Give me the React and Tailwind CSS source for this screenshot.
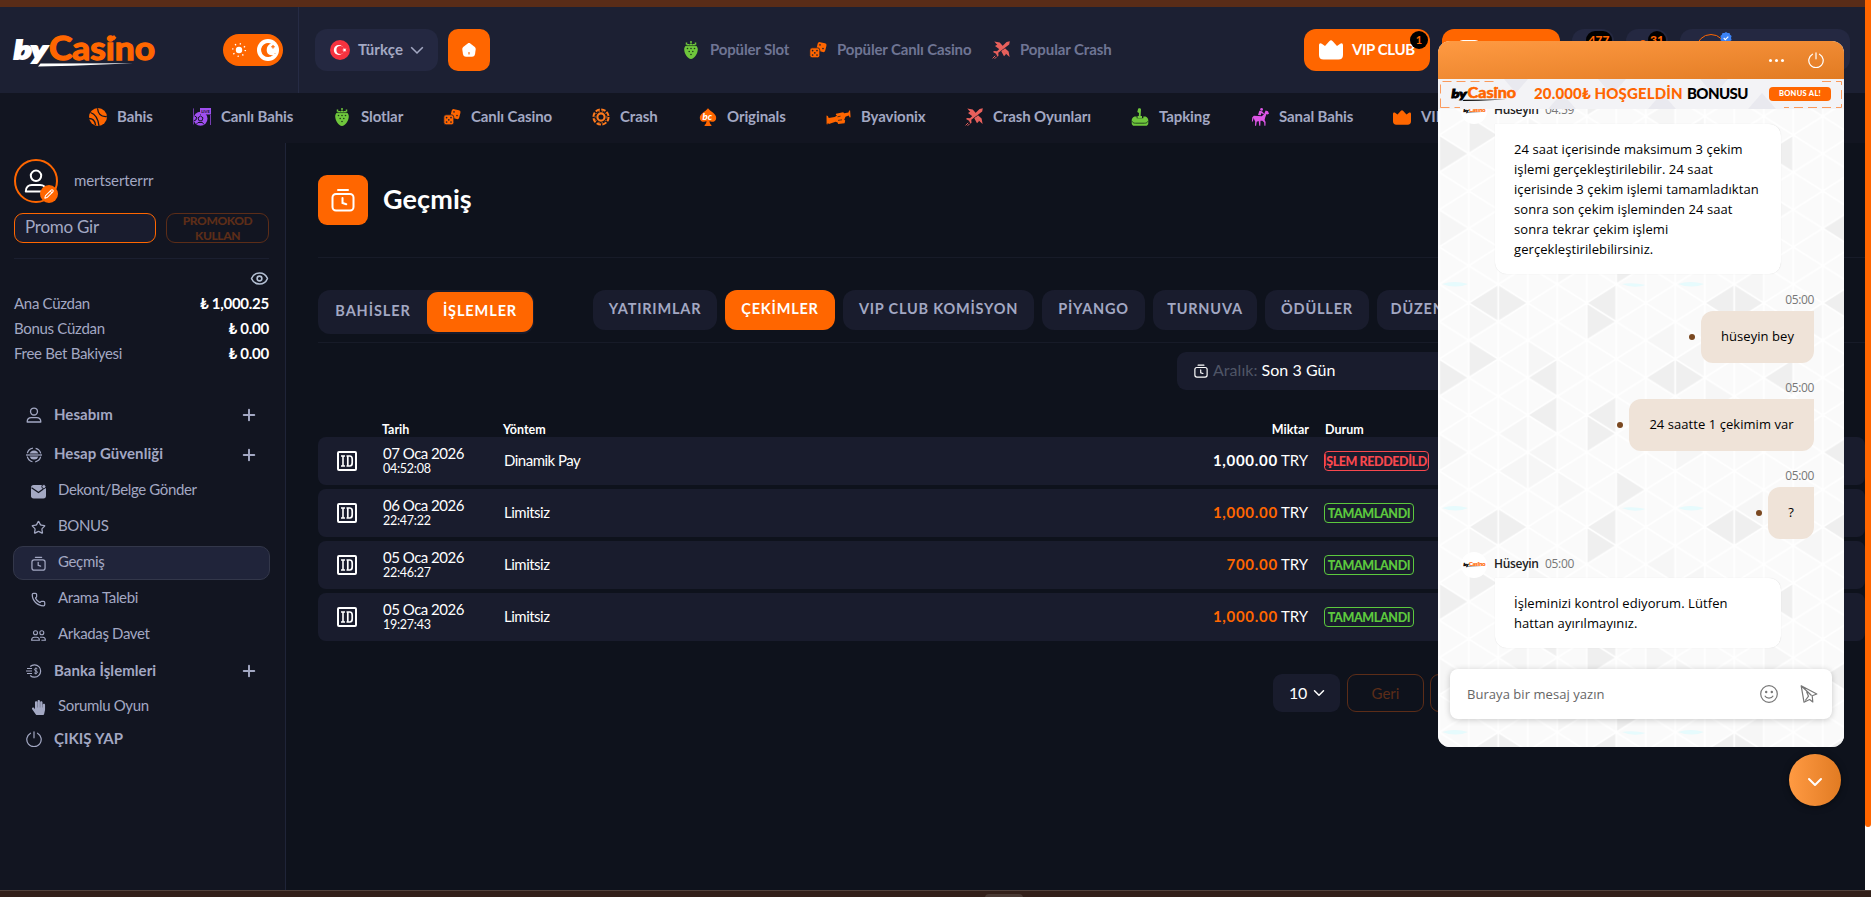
import { FaHandPaper } from "react-icons/fa";
import { ChevronDown, Eye, Pencil, Phone, Plus, Star } from "lucide-react";

function Strawberry({ className }) {
  return (
    <svg viewBox="0 0 18 18" className={className}>
      <path d="M9 3.600c4 0 6.800 1.400 6.800 5 0 4-3.500 9.400-6.800 9.400S2.200 12.600 2.200 8.600c0-3.600 2.800-5 6.800-5z" fill="#6fc63c" />
      <path d="M4.500 1.500v2.200h9V1.500M9 0v3" stroke="#6fc63c" strokeWidth="1.500" fill="none" strokeDasharray="2.200 .6" />
      <g fill="#1c3a1c">
        <circle cx="5.500" cy="7.500" r=".8" /><circle cx="9" cy="7.500" r=".8" /><circle cx="12.500" cy="7.500" r=".8" />
        <circle cx="7.200" cy="10.500" r=".8" /><circle cx="10.800" cy="10.500" r=".8" /><circle cx="9" cy="13.500" r=".8" />
      </g>
      <path d="M4 4.600h10" stroke="#1c3a1c" strokeWidth=".7" />
    </svg>
  );
}

function Dice({ className }) {
  return (
    <svg viewBox="0 0 18 18" className={className}>
      <rect x="8" y="1.600" width="9" height="9" rx="2" fill="#ff6600" transform="rotate(14 12.500 6)" />
      <rect x=".8" y="6.800" width="10" height="10" rx="2.300" fill="#ff6600" stroke="#1a1d2e" strokeWidth=".8" />
      <g fill="#1a1d2e">
        <circle cx="3.600" cy="9.600" r=".85" /><circle cx="8" cy="9.600" r=".85" /><circle cx="5.800" cy="11.800" r=".85" />
        <circle cx="3.600" cy="14" r=".85" /><circle cx="8" cy="14" r=".85" />
        <circle cx="11" cy="3.900" r=".8" /><circle cx="14" cy="7.600" r=".8" />
      </g>
    </svg>
  );
}

function CrossedPlanes({ className }) {
  return (
    <svg viewBox="0 0 18 18" className={className} fill="#e8605c">
      <path d="M17.800.2 14.600.9 5 10.300l-3-.2-1 1 3 1.600 1.500 3 1-1-.2-2.900L17.200 3.600z" />
      <path d="M2.300.6l5.400.8 3.600 4-2.400 2.600zM17.600 16l-1-5.400-3.600-3.400-2.600 2.400z" />
      <path d="M3 5 5.600 3.400l4 4.200-1.200 1.400zM12 15.200l2.300-2.400-3.600-3.800-1.400 1.200z" />
      <path d="M.6 17.400 3.200 14.800M2.600 17.800l2-2" stroke="#e8605c" strokeWidth="1" />
    </svg>
  );
}

function Ball({ className }) {
  return (
    <svg viewBox="0 0 18 18" className={className}>
      <circle cx="9" cy="9" r="9" fill="#ff6600" />
      <g fill="none" stroke="#121521" strokeWidth="1.300">
        <path d="M1.500 4.500C6 6 9 10 10 17.800" />
        <path d="M8.500.3C9 5.500 12 9 17.800 8.500" />
        <path d="M0 10.500c3.500 0 6 2.500 6.500 6.500" />
      </g>
    </svg>
  );
}

function LiveBall({ className }) {
  return (
    <svg viewBox="0 0 18 18" className={className}>
      <circle cx="7.500" cy="10.800" r="7" fill="#a04ff0" />
      <path d="m7.500 8 2.500 1.800-1 3H6l-1-3zM1.500 8l2 1-.5 3-2.200.6M3.500 16l1.500-1.500h4.500l1.200 1.800M7.500 5v2" fill="none" stroke="#121521" strokeWidth="1" />
      <rect x="7" y="0" width="11" height="6.500" fill="#a04ff0" />
      <text x="8.200" y="4.900" fontSize="4.200" fontWeight="700" fill="#121521" fontFamily="Lato">LIVE</text>
      <path d="M.4.400v16M17.500 7v10" stroke="#a04ff0" strokeWidth=".7" />
    </svg>
  );
}

function Chip({ className }) {
  return (
    <svg viewBox="0 0 18 18" className={className} fill="none" stroke="#ff7a1c">
      <circle cx="9" cy="9" r="7.600" strokeWidth="2" strokeDasharray="4.500 1.470" />
      <circle cx="9" cy="9" r="3.600" strokeWidth="2.100" />
      <circle cx="9" cy="9" r="5.900" strokeWidth=".8" strokeDasharray="1.500 2" />
    </svg>
  );
}

function Spade({ className }) {
  return (
    <svg viewBox="0 0 18 18" className={className}>
      <path d="M9 .3c2 3 8.200 5.400 8.200 9.600 0 3.700-4.500 4.900-6.700 3.100.1 1.800.5 3 1.900 4v.9H5.600V17c1.400-1 1.800-2.200 1.900-4C5.300 14.800.8 13.600.8 9.900.8 5.700 7 3.300 9 .3z" fill="#ff6600" />
      <text x="3.600" y="12.200" fontSize="9.500" fontWeight="900" fontStyle="italic" fill="#fff" fontFamily="Lato">bc</text>
    </svg>
  );
}

function Biplane({ className }) {
  return (
    <svg viewBox="0 0 25 18" className={className} fill="#ff6600">
      <path d="M.5 7.600c1 0 1.600.7 2.200 2.300l6-.8 2.300-1.700-1.200-.6.200-1 7.200-1.600 1 1 4.200-.6.800-2.200.9.100.5 6.700-.9.200-1-1.800-3.200 1.100-1.300 3.100 1 .8-.6 2.600-6.500.9-.5-1.600-2-.8-6 2-.6.200-1.200-1-.4 1.500-.8-.1z" />
      <path d="M11.500 8.800l3-.6M12 12.400l4-.6" stroke="#121521" strokeWidth=".7" />
    </svg>
  );
}

function Tap({ className }) {
  return (
    <svg viewBox="0 0 18 18" className={className}>
      <path d="M7 1.200C7-.2 10-.3 10 1.500L9.600 8h1.400v2H6.500V8h1.300L8 5 6.300 4z" fill="#6fc63c" />
      <path d="M3.500 8.600h2.200v1.600h6.600V8.600h2.200c2 1 2.800 2.200 2.800 4v2.600c0 1.500-1 2.600-2.600 2.600H3.300c-1.600 0-2.600-1.100-2.600-2.600v-2.600c0-1.800.8-3 2.800-4z" fill="#6fc63c" />
      <path d="M1 13.200c1 2 2.500 2 3.500 2h9c1 0 2.500 0 3.500-2" fill="none" stroke="#1c3a1c" strokeWidth=".9" />
    </svg>
  );
}

function Rider({ className }) {
  return (
    <svg viewBox="0 0 18 18" className={className}>
      <g fill="#dd55e6">
        <circle cx="10.600" cy="1.400" r="1.400" />
        <path d="M8.400 2.800 11 3.200l2 2.300-.6.800-2-1.300-.6 2.200-2.800-.3z" />
        <path d="M14.600 2.600 17 3.200l1 2.600-1.600.6-.9-.5-1.300 3.700-.6 2.400 1 2-.2 3.800h-1l-.2-3.200-1.800-1.900-1.900.1-.2 5H8.200l-.5-4.800-2 .8-.6 4H4l.2-4.400-.9-1.600L2.700 10l-.9 3.500-.9.300.3-4.200L2.800 7.800l4.400.1 3.600.3 2.400-2.200z" />
      </g>
    </svg>
  );
}

function Crown({ className }) {
  return (
    <svg viewBox="0 0 24 20" className={className} fill="currentColor">
      <path d="M0 5.200c0-2 1.500-2.600 2.800-1.400L6 6l4.300-4.700c1.200-1.400 2.200-1.400 3.400 0L18 6l3.200-2.200c1.300-1.200 2.800-.6 2.800 1.400V15c0 3-1.600 4.500-4.500 4.500h-15C1.600 19.500 0 18 0 15z" />
    </svg>
  );
}

function NavCrown({ className }) {
  return (
    <span className={className}>
      <Crown className="mt-0.5 h-[15px] w-[18px] text-[#ff6600]" />
    </span>
  );
}

function UserIcon({ className }) {
  return (
    <svg viewBox="0 0 24 24" className={className} fill="none" stroke="currentColor" strokeWidth="2">
      <circle cx="12" cy="6.800" r="5.200" />
      <path d="M1.800 22.500c0-4.500 3-6.500 6-6.500h8.400c3 0 6 2 6 6.500z" strokeLinejoin="round" />
    </svg>
  );
}

function HistoryIcon({ className }) {
  return (
    <svg viewBox="0 0 24 24" className={className} fill="none" stroke="currentColor" strokeWidth="2" strokeLinecap="round">
      <path d="M7 2h10" />
      <rect x="1.500" y="6" width="21" height="16.500" rx="3.500" />
      <path d="M11.500 10v5l3.800 1.300" />
    </svg>
  );
}

function ScanIcon({ className }) {
  return (
    <svg viewBox="0 0 16 16" className={className} fill="none" stroke="currentColor" strokeWidth="1.200">
      <circle cx="8" cy="8" r="6.900" strokeDasharray="8 2.830" strokeDashoffset="-1.500" />
      <circle cx="8" cy="8" r="4.600" fill="currentColor" stroke="none" />
      <path d="M0 8h16" stroke="#121521" strokeWidth="3" />
      <path d="M0 8h16" strokeWidth="1.800" opacity=".7" />
    </svg>
  );
}

function MailIcon({ className }) {
  return (
    <svg viewBox="0 0 14 14" className={className}>
      <rect x="0" y="1" width="14" height="12.500" rx="2.500" fill="currentColor" />
      <path d="M.5 3.500 7 8l4.500-3.400" fill="none" stroke="#121521" strokeWidth="1.200" />
      <circle cx="12" cy="2.400" r="1.900" fill="currentColor" stroke="#121521" strokeWidth=".9" />
    </svg>
  );
}

function FriendsIcon({ className }) {
  return (
    <svg viewBox="0 0 15 12" className={className} fill="none" stroke="currentColor" strokeWidth="1.100">
      <circle cx="4.500" cy="3.300" r="2" /><circle cx="10.800" cy="3.300" r="2" />
      <path d="M.6 10.800c0-2.200 1.200-3 2.800-3h2.200c1.600 0 2.800.8 2.800 3zM9 7.800h2.800c1.500 0 2.600.9 2.600 3h-4" />
    </svg>
  );
}

function CoinIcon({ className }) {
  return (
    <svg viewBox="0 0 16 14" className={className} fill="none" stroke="currentColor" strokeWidth="1.200">
      <path d="M4.200 2.500A6.200 6.200 0 1 1 4.200 11.500M1 4.500h5M0 7h6M1 9.500h5" />
      <path d="M11.400 4.800c-1.200-.9-3-.4-3 .8 0 1.500 3 1 3 2.600 0 1.300-2 1.700-3.200.7M9.900 3.600v6.800" strokeWidth="1" />
    </svg>
  );
}

function PowerIcon({ className }) {
  return (
    <svg viewBox="0 0 16 16" className={className} fill="none" stroke="currentColor" strokeWidth="1.200" strokeLinecap="round">
      <path d="M4.500 2.200a7.200 7.200 0 1 0 7 0M8 .8v6" />
    </svg>
  );
}

function IdIcon() {
  return (
    <svg viewBox="0 0 20 20" className="size-5 shrink-0" fill="none" stroke="#fff">
      <rect x="1" y="1" width="18" height="18" rx="1" strokeWidth="2" />
      <path d="M4 5h4M4 15h4M6 5v10" strokeWidth="1.600" />
      <path d="M10.800 5v10M9.500 5h3.200c1.800 0 2.500 1.200 2.500 3v4c0 1.800-.7 3-2.500 3H9.500" strokeWidth="1.700" />
    </svg>
  );
}

function Logo({ className, byFill }) {
  return (
    <svg viewBox="0 0 144 32" className={`overflow-visible ${className}`}>
      <text x="1" y="24" fontSize="24" fontWeight="900" fontStyle="italic" fill={byFill} stroke={byFill} strokeWidth="2" fontFamily="Lato" textLength="33" lengthAdjust="spacingAndGlyphs">by</text>
      <text x="36" y="25" fontSize="31.500" fontWeight="700" fill="#ff6600" stroke="#ff6600" strokeWidth="1.300" fontFamily="Lato" textLength="106" lengthAdjust="spacingAndGlyphs">Casino</text>
      <path d="M25 31.500 27.500 28.400 120 28.200 60 30.800z" fill={byFill} />
      <path d="m101 0 2.500 2.800L101 5.600l-2.500-2.800z" fill="#ff6600" />
    </svg>
  );
}

const navItems = [
  { label: "Bahis", icon: Ball, iconWidth: "w-[18px]", width: "w-[36px]" },
  { label: "Canlı Bahis", icon: LiveBall, iconWidth: "w-[18px]", width: "w-[72px]" },
  { label: "Slotlar", icon: Strawberry, iconWidth: "w-[18px]", width: "w-[42px]" },
  { label: "Canlı Casino", icon: Dice, iconWidth: "w-[18px]", width: "w-[81px]" },
  { label: "Crash", icon: Chip, iconWidth: "w-[18px]", width: "w-[39px]" },
  { label: "Originals", icon: Spade, iconWidth: "w-[18px]", width: "w-[59px]" },
  { label: "Byavionix", icon: Biplane, iconWidth: "w-[25px]", width: "w-[64px]" },
  { label: "Crash Oyunları", icon: CrossedPlanes, iconWidth: "w-[18px]", width: "w-[98px]" },
  { label: "Tapking", icon: Tap, iconWidth: "w-[18px]", width: "w-[52px]" },
  { label: "Sanal Bahis", icon: Rider, iconWidth: "w-[18px]", width: "w-[74px]" },
  { label: "VIP CLUB", icon: NavCrown, iconWidth: "w-[18px]", width: "w-[64px]" },
];

const wallets = [
  { label: "Ana Cüzdan", value: "₺ 1,000.25" },
  { label: "Bonus Cüzdan", value: "₺ 0.00" },
  { label: "Free Bet Bakiyesi", value: "₺ 0.00" },
];

const filters = [
  { label: "YATIRIMLAR", width: "w-[124px]" },
  { label: "ÇEKİMLER", width: "w-[110px]", active: true },
  { label: "VIP CLUB KOMİSYON", width: "w-[191px]" },
  { label: "PİYANGO", width: "w-[103px]" },
  { label: "TURNUVA", width: "w-[104px]" },
  { label: "ÖDÜLLER", width: "w-[104px]" },
  { label: "DÜZENLEMELER", width: "w-[150px]" },
];

const rows = [
  { date: "07 Oca 2026", time: "04:52:08", method: "Dinamik Pay", amount: "1,000.00", rejected: true },
  { date: "06 Oca 2026", time: "22:47:22", method: "Limitsiz", amount: "1,000.00" },
  { date: "05 Oca 2026", time: "22:46:27", method: "Limitsiz", amount: "700.00" },
  { date: "05 Oca 2026", time: "19:27:43", method: "Limitsiz", amount: "1,000.00" },
];

function Header() {
  return (
    <header className="flex h-[86px] shrink-0 items-center bg-[#1c2033]">
      <div className="flex h-full w-[299px] shrink-0 items-center justify-between border-r border-[#262b44] pl-[13px] pr-[15px]">
        <Logo className="mt-[1px] h-8 w-36" byFill="#ffffff" />
        <div className="flex h-8 w-[60px] items-center justify-between rounded-full bg-[#ff6600] pl-2 pr-1">
          <svg viewBox="0 0 16 16" className="size-4">
            <circle cx="8" cy="8" r="3.200" fill="#fff" />
            <circle cx="8" cy="8" r="6.300" fill="none" stroke="#fff" strokeWidth="1.500" strokeDasharray="1.200 3.748" />
          </svg>
          <svg viewBox="0 0 22 22" className="size-[22px]">
            <circle cx="11" cy="11" r="11" fill="#fff" />
            <path d="M14 4.600A7 7 0 1 0 16 16c-4 .8-6.300-1.500-6.300-5 0-3 1.600-5.500 4.300-6.400z" fill="#ff6600" />
            <path d="m16 6 .5 1.300 1.300.5-1.300.5L16 9.600l-.5-1.300-1.300-.5 1.300-.5zM17.500 14.500h1" fill="#ff6600" stroke="#ff6600" strokeWidth=".5" />
          </svg>
        </div>
      </div>

      <div className="ml-4 flex h-[42px] w-[123px] shrink-0 items-center rounded-xl bg-[#242841] pl-[15px]">
        <svg viewBox="0 0 20 20" className="size-5">
          <circle cx="10" cy="10" r="10" fill="#f5333f" />
          <circle cx="8.800" cy="10" r="5" fill="#fff" />
          <circle cx="10.300" cy="10" r="3.900" fill="#f5333f" />
          <path d="m12 10 1.600-.6.100-1.700 1 1.400 1.700-.5-1 1.400 1 1.400-1.700-.5-1 1.400-.1-1.700z" fill="#fff" />
        </svg>
        <span className="ml-2 w-[45px] pb-0.5 text-[15px] font-bold tracking-[0.1px] text-[#a3a8c3]">Türkçe</span>
        <svg viewBox="0 0 12 7" className="ml-2 h-[7px] w-3 overflow-visible" fill="none" stroke="#a3a8c3" strokeWidth="1.600">
          <path d="M.2.300 6 6 11.800.300" />
        </svg>
      </div>
      <div className="ml-2.5 flex size-[42px] shrink-0 items-center justify-center rounded-[10px] bg-[#ff6600]">
        <svg viewBox="0 0 14 14" className="size-3.5">
          <path d="M5.700.5c.8-.6 1.800-.6 2.600 0L12.800 4c.8.700 1 1.400.9 2.300l-.6 4.500c-.3 2-1.200 3-3.200 3H4.100c-2 0-2.900-1-3.200-3L.3 6.300C.2 5.400.4 4.700 1.200 4z" fill="#fff" />
          <rect x="6.400" y="9" width="1.200" height="2.500" rx=".6" fill="#ff6600" />
        </svg>
      </div>

      <div className="ml-[192px] flex items-center gap-[21px] text-[15px] font-bold tracking-[-0.15px] whitespace-nowrap text-[#6f7594]">
        <div className="flex items-center gap-2.5">
          <Strawberry className="size-[18px]" />
          <span className="w-[78px] pb-0.5">Popüler Slot</span>
        </div>
        <div className="flex items-center gap-2.5">
          <Dice className="size-[18px]" />
          <span className="w-[134px] pb-0.5">Popüler Canlı Casino</span>
        </div>
        <div className="flex items-center gap-2.5">
          <CrossedPlanes className="size-[18px]" />
          <span className="pb-0.5 tracking-[-0.1px]">Popular Crash</span>
        </div>
      </div>

      <div className="ml-auto mr-[15px] flex shrink-0 items-center gap-3">
        <div className="relative flex h-[42px] w-[126px] items-center rounded-xl bg-[#ff6600] pl-[15px] text-white">
          <Crown className="h-5 w-6" />
          <span className="ml-[9px] pb-0.5 text-[15px] font-bold tracking-[-0.4px] whitespace-nowrap">VIP CLUB</span>
          <span className="absolute top-[2px] right-[2px] flex size-[18px] items-center justify-center rounded-full bg-black text-[11px] font-bold text-[#ff6600]">1</span>
        </div>
        <div className="flex h-[42px] w-[118px] rounded-xl bg-[#ff6600] pt-[11px] pl-[15px]">
          <span className="h-4 w-6 rounded-md bg-white" />
        </div>
        <div className="relative h-[42px] w-[42px] rounded-xl bg-[#242841]">
          <span className="absolute top-[2px] right-[2px] flex h-[18px] w-[26px] items-center justify-center rounded-full bg-black text-[12px] font-black text-[#ff6600]">477</span>
        </div>
        <div className="relative h-[42px] w-[42px] rounded-xl bg-[#242841] pt-[11px] pl-[14px]">
          <span className="block size-1.5 rounded-full bg-[#ff6600]" />
          <span className="absolute top-[2px] right-[2px] flex size-[18px] items-center justify-center rounded-full bg-black text-[12px] font-black text-[#ff6600]">31</span>
        </div>
        <div className="relative h-[42px] w-[170px] rounded-xl bg-[#242841] pt-[5px] pl-[16px]">
          <span className="block size-[30px] rounded-full border border-[#ff6600]" />
          <svg viewBox="0 0 12 12" className="absolute top-[3px] left-[40px] size-3">
            <path d="m6 0 1.600 1.100 1.900-.1.600 1.800 1.500 1.200L11 6l.6 2-1.500 1.200-.6 1.800-1.900-.1L6 12l-1.600-1.100-1.900.1-.6-1.800L.4 8 1 6 .4 4l1.500-1.200L2.500 1l1.900.1z" fill="#3b82f6" />
            <path d="m3.700 6 1.600 1.600 3-3" fill="none" stroke="#fff" strokeWidth="1.100" />
          </svg>
        </div>
      </div>
    </header>
  );
}

function Nav() {
  return (
    <nav className="flex h-[50px] shrink-0 items-center gap-10 overflow-hidden bg-[#121521] pb-0.5 pl-[89px]">
      {navItems.map(({ label, icon: Icon, iconWidth, width }) => (
        <div key={label} className="flex shrink-0 items-center gap-2.5">
          <span className={`${iconWidth} h-[18px] shrink-0`}>
            <Icon className="block h-full w-full" />
          </span>
          <span className={`${width} pb-0.5 text-[15px] font-bold tracking-[-0.1px] whitespace-nowrap text-[#a3a8c3]`}>{label}</span>
        </div>
      ))}
    </nav>
  );
}

function MenuGroup({ icon: Icon, label, className, expandable }) {
  return (
    <div className={`flex items-center pl-[13px] pr-[12px] text-[15px] font-bold tracking-[0.05px] ${className}`}>
      <Icon className="size-4" />
      <span className="ml-3 flex-1 pb-0.5">{label}</span>
      {expandable && <Plus className="size-[18px]" strokeWidth={2.6} />}
    </div>
  );
}

function MenuLink({ icon: Icon, label, active }) {
  return (
    <div className={`my-px flex h-[34px] items-center rounded-[10px] border pl-[17px] text-[15px] tracking-[-0.35px] ${active ? "border-[#33374a] bg-[#20243a]" : "border-transparent"}`}>
      <Icon className="size-[15px] shrink-0" />
      <span className="ml-3 pb-[3px]">{label}</span>
    </div>
  );
}

function Sidebar() {
  return (
    <aside className="flex w-[286px] shrink-0 flex-col border-r border-[#1f2438] bg-[#121521] pr-[15px] pl-[13px] text-[#a3a8c3]">
      <div className="ml-px mt-4 flex items-center">
        <div className="relative flex size-11 items-center justify-center rounded-full border-2 border-[#ff6600] text-white">
          <UserIcon className="size-6" />
          <span className="absolute -right-[2px] -bottom-[2px] flex size-[18px] items-center justify-center rounded-full bg-[#ff6600]">
            <Pencil className="size-2.5" strokeWidth={2.5} />
          </span>
        </div>
        <span className="ml-4 pb-0.5 text-[15px] tracking-[-0.1px]">mertserterrr</span>
      </div>

      <div className="ml-px mt-2.5 flex gap-2.5">
        <div className="flex h-[30px] w-[142px] items-center rounded-[9px] border border-[#ff6600] bg-[#191c2e] pb-0.5 pl-2.5 text-[17px] tracking-[-0.25px]">Promo Gir</div>
        <div className="flex h-[30px] w-[103px] items-center justify-center rounded-[9px] border border-[#5c2d18] text-center text-[12px] leading-[15px] font-black tracking-[-0.4px] text-[#5c2d18]">
          PROMOKOD<br />KULLAN
        </div>
      </div>

      <div className="ml-px mt-[15px] w-[255px] border-t border-[#1b1f30]" />
      <div className="mt-2.5 flex justify-end pr-px">
        <Eye className="size-[19px] text-[#b4c0d4]" />
      </div>

      <div className="ml-px mt-1 pr-px text-[15px] tracking-[-0.3px]">
        {wallets.map((wallet) => (
          <div key={wallet.label} className="flex h-[25px] items-center justify-between pb-0.5">
            <span>{wallet.label}</span>
            <span className="font-bold tracking-[-0.25px] text-white">{wallet.value}</span>
          </div>
        ))}
      </div>

      <div className="mt-[28px] flex flex-col">
        <MenuGroup icon={UserIcon} label="Hesabım" className="h-10" expandable />
        <MenuGroup icon={ScanIcon} label="Hesap Güvenliği" className="h-[38px] pt-px" expandable />
        <MenuLink icon={MailIcon} label="Dekont/Belge Gönder" />
        <MenuLink icon={Star} label="BONUS" />
        <MenuLink icon={HistoryIcon} label="Geçmiş" active />
        <MenuLink icon={Phone} label="Arama Talebi" />
        <MenuLink icon={FriendsIcon} label="Arkadaş Davet" />
        <MenuGroup icon={CoinIcon} label="Banka İşlemleri" className="h-9" expandable />
        <MenuLink icon={FaHandPaper} label="Sorumlu Oyun" />
        <MenuGroup icon={PowerIcon} label="ÇIKIŞ YAP" className="h-7" />
      </div>
    </aside>
  );
}

function History() {
  return (
    <main className="min-w-0 flex-1 overflow-hidden pt-8 pl-8">
      <div className="flex items-center">
        <div className="flex size-[50px] items-center justify-center rounded-[9px] bg-[#ff6600] text-white">
          <HistoryIcon className="size-6" />
        </div>
        <h1 className="ml-[15px] pb-px text-[27px] font-bold tracking-[0.1px] text-white">Geçmiş</h1>
      </div>

      <div className="mt-8 border-t border-[#171b28]" />

      <div className="mt-8 flex items-start border-b border-[#171b28] pb-2">
        <div className="flex h-11 w-[216px] shrink-0 items-center rounded-xl bg-[#191c2d] p-px text-[14.5px] font-bold tracking-[0.9px] text-[#a3a8c3]">
          <span className="flex w-[108px] items-center justify-center pb-0.5">BAHİSLER</span>
          <span className="flex h-10 w-[106px] items-center justify-center rounded-[11px] bg-[#ff6600] pb-0.5 text-white">İŞLEMLER</span>
        </div>
        <div className="ml-[59px] flex gap-2">
          {filters.map((filter) => (
            <span
              key={filter.label}
              className={`${filter.width} flex h-10 shrink-0 items-center justify-center rounded-xl pb-0.5 text-[14.5px] font-bold tracking-[0.8px] whitespace-nowrap ${filter.active ? "bg-[#ff6600] text-white" : "bg-[#191c2d] text-[#a3a8c3]"}`}
            >
              {filter.label}
            </span>
          ))}
        </div>
      </div>

      <div className="mt-[9px] ml-[859px] flex h-[38px] w-[320px] items-center rounded-[9px] bg-[#191c2d] pl-[17px] text-[16px] tracking-[0.05px] text-white">
        <HistoryIcon className="size-3.5" />
        <span className="ml-[5px] pb-0.5 text-[#4f5566]">Aralık:</span>
        <span className="ml-1 pb-0.5">Son 3 Gün</span>
      </div>

      <div className="mt-8 flex h-[15px] items-center pt-0.5 text-[12.5px] font-bold text-white">
        <span className="ml-16 w-[121px]">Tarih</span>
        <span className="w-[600px]">Yöntem</span>
        <span className="w-[206px] text-right">Miktar</span>
        <span className="ml-4">Durum</span>
      </div>
      <div className="flex flex-col gap-1">
        {rows.map((row) => (
          <div key={row.time} className="flex h-12 items-center rounded-lg bg-[#191c2d] pl-[19px] text-[15px] tracking-[-0.5px] text-white">
            <IdIcon />
            <div className="ml-[26px] w-[121px] pb-px">
              <div className="leading-4">{row.date}</div>
              <div className="text-[12.5px] leading-[15px] tracking-[-0.25px]">{row.time}</div>
            </div>
            <span className="w-[600px] pb-0.5">{row.method}</span>
            <span className="w-[204px] pb-0.5 text-right tracking-[-0.1px]">
              <span className={`font-bold tracking-[0.7px] ${row.rejected ? "text-white" : "text-[#ff6600]"}`}>{row.amount}</span> TRY
            </span>
            {row.rejected ? (
              <span className="ml-4 flex h-5 w-[105px] items-center justify-center overflow-hidden rounded border border-[#f8484e] pt-px text-[12.5px] leading-4 font-black tracking-[-0.4px] whitespace-nowrap text-[#f8484e]">İŞLEM REDDEDİLDİ</span>
            ) : (
              <span className="ml-4 flex h-5 w-[90px] items-center justify-center rounded border border-[#5cc83e] pt-px text-[12.5px] leading-4 font-black tracking-[-0.4px] text-[#5cc83e]">TAMAMLANDI</span>
            )}
          </div>
        ))}
      </div>

      <div className="mt-[33px] ml-[955px] flex h-[38px] text-[15px]">
        <div className="flex w-[67px] items-center rounded-[9px] bg-[#191c2d] pl-4 text-[16px] text-white">
          <span className="w-[17px] tracking-[-0.3px]">10</span>
          <ChevronDown className="ml-[4px] size-[18px]" />
        </div>
        <div className="ml-[7px] flex w-[77px] items-center justify-center rounded-[9px] border border-[#5c2d18] text-[#5c2d18]">Geri</div>
        <div className="ml-1.5 flex w-[77px] items-center justify-center rounded-[9px] border border-[#5c2d18] text-[#5c2d18]">İleri</div>
      </div>
    </main>
  );
}

// tip column, tip row (in cells), direction of the tip
const darkTriangles = [
  [1, 2, 1], [3, 2, -1], [7, 2, -1], [9, 2, 1], [11, 2, -1], [2, 1.5, 1], [1, 0, -1], [3, 0, 1], [9, 0, -1],
  [11, 0, 1], [6, 0.5, 1], [5, 0, -1], [13, 0, -1], [3, 3, -1], [5, 3, -1], [6, 3.5, 1], [7, 5, 1], [13, 4, -1],
  [1, 6, -1], [3, 6, 1], [9, 6, -1], [11, 6, 1], [5, 6, -1], [13, 6, -1],
];
const softTriangles = [
  [2, 0.5, 1], [2, 3.5, -1], [3, 4, -1], [4, 4.5, 1], [5, 5, 1], [8, 1.5, -1], [8, 3.5, 1], [9, 4, 1], [10, 2.5, 1],
  [12, 0.5, -1], [12, 3.5, 1], [7, 1, -1], [4, 1.5, 1], [10, 5.5, -1], [1, 4, 1], [2, 4.5, -1],
];

function trianglePoints([col, row, dir]) {
  const x = 1.2 + col * 29.5;
  const y = row * 37.333;
  const base = x - dir * 29.5;
  return `${x},${y} ${base},${y - 18.67} ${base},${y + 18.67}`;
}

function ChatBackground() {
  return (
    <svg className="absolute -top-[30px] left-0 h-[668px] w-full">
      <defs>
        <pattern id="triangles" width="414.200" height="224" patternUnits="userSpaceOnUse">
          <rect width="415" height="224" fill="#fafafa" />
          {softTriangles.map((t) => (
            <polygon key={t.join()} points={trianglePoints(t)} fill="#f6f6f6" />
          ))}
          {darkTriangles.map((t) => (
            <polygon key={t.join()} points={trianglePoints(t)} fill="#efefef" />
          ))}
          <g fill="#e6fbfd">
            <path d="M4 205q12-4 26 0-12 5-26 0zM184 205q10-2 24 1-12 4-24-1zM240 205q12-4 26 0-12 5-26 0z" />
          </g>
        </pattern>
        <pattern id="grid" x="1.200" width="59" height="37.333" patternUnits="userSpaceOnUse">
          <path d="M0 0v38M29.500 0v38M59 0v38M0 0 59 37.333M0 37.333 59 0" stroke="#fff" strokeWidth="1.600" fill="none" />
        </pattern>
      </defs>
      <rect width="100%" height="100%" fill="url(#triangles)" />
      <rect width="450" height="100%" fill="url(#grid)" transform="translate(-29.500 0)" />
    </svg>
  );
}

function Agent({ time }) {
  return (
    <div className="flex h-[27px] items-center pl-[23px]">
      <span className="flex size-[26px] items-center justify-center rounded-full bg-white">
        <Logo className="h-[5px] w-[23px]" byFill="#000000" />
      </span>
      <span className="ml-[7px] w-[44px] pb-0.5 text-[12px] font-semibold tracking-[-0.3px] text-[#222]">Hüseyin</span>
      <span className="ml-[7px] pb-0.5 text-[12px] tracking-[-0.3px] text-[#777]">{time}</span>
    </div>
  );
}

function Reply({ text, width }) {
  return (
    <div className="mb-3 flex flex-col items-end pr-[30px]">
      <span className="h-6 pt-px text-[12px] leading-6 tracking-[-0.35px] text-[#777]">05:00</span>
      <div className="flex items-center gap-1.5">
        <span className="size-1.5 rounded-full bg-[#7a4820]" />
        <span className={`${width} flex h-[52px] items-center justify-center rounded-xl rounded-tr-none bg-[#efe3d8] text-[13px] tracking-[0.05px] whitespace-nowrap text-black`}>{text}</span>
      </div>
    </div>
  );
}

function Chat() {
  return (
    <section className="absolute top-[41px] left-[1438px] flex h-[706px] w-[406px] flex-col overflow-hidden rounded-xl bg-[#fafafa] font-['Open_Sans',sans-serif]">
      <div className="flex h-[38px] shrink-0 items-center justify-end bg-gradient-to-br from-[#ff9a42] to-[#e17b22] pr-5 text-white">
        <div className="flex gap-[3px]">
          <span className="size-[3px] rounded-full bg-white" />
          <span className="size-[3px] rounded-full bg-white" />
          <span className="size-[3px] rounded-full bg-white" />
        </div>
        <PowerIcon className="ml-6 size-4" />
      </div>

      <div className="relative z-10 flex h-[30px] shrink-0 items-center bg-[#f3f3f6] pl-[13px] font-[Lato,sans-serif]">
        <svg className="absolute inset-0 h-full w-full" fill="none" stroke="#fb9a5c" strokeWidth="1">
          <g fill="#e9e9ef" stroke="none">
            <path d="m66 0 12 14 12-14zM110 30l14-16 14 16zM160 0l14 16L188 0zM210 30l14-16 14 16zM262 0l14 16L290 0zM310 30l14-16 14 16z" />
          </g>
          <path d="M2.500 28.500V2.500H60M2.500 28.500H22M384 2.500h19.500v26H346" strokeDasharray="9 5" />
        </svg>
        <Logo className="relative h-[16px] w-[66px]" byFill="#000000" />
        <span className="relative ml-[17px] w-[149px] pb-px text-[15px] font-black tracking-[0.15px] whitespace-nowrap text-[#ff6600]">20.000₺ HOŞGELDİN</span>
        <span className="relative ml-[4px] w-[60px] pb-px text-[15px] font-black tracking-[-0.6px] text-black">BONUSU</span>
        <span className="relative ml-[22px] flex h-[14px] w-[62px] items-center justify-center rounded bg-[#ff6600] text-[7.5px] font-black tracking-[0.3px] text-white">BONUS AL!</span>
      </div>

      <div className="relative flex-1">
        <ChatBackground />
        <div className="relative -mt-[12px]">
          <Agent time="04:59" />
          <div className="ml-[57px] h-[150px] w-[286px] rounded-xl rounded-tl-none bg-white pt-[15px] pl-[19px] text-[13px] leading-5 tracking-[0.08px] whitespace-nowrap text-black shadow-[0_0_1px_rgba(0,0,0,0.15)]">
            24 saat içerisinde maksimum 3 çekim<br />
            işlemi gerçekleştirilebilir. 24 saat<br />
            içerisinde 3 çekim işlemi tamamladıktan<br />
            sonra son çekim işleminden 24 saat<br />
            sonra tekrar çekim işlemi<br />
            gerçekleştirilebilirsiniz.
          </div>
          <div className="mt-[13px]">
            <Reply text="hüseyin bey" width="w-[113px]" />
            <Reply text="24 saatte 1 çekimim var" width="w-[185px]" />
            <Reply text="?" width="w-[46px]" />
          </div>
          <Agent time="05:00" />
          <div className="ml-[57px] h-[70px] w-[286px] rounded-xl rounded-tl-none bg-white pt-[15px] pl-[19px] text-[13px] leading-5 tracking-[0.08px] whitespace-nowrap text-black shadow-[0_0_1px_rgba(0,0,0,0.15)]">
            İşleminizi kontrol ediyorum. Lütfen<br />
            hattan ayırılmayınız.
          </div>
          <div className="mx-3 mt-[21px] flex h-[50px] items-center rounded-lg bg-white pr-[14px] pl-[17px] text-[13px] text-[#666] shadow-[0_1px_6px_rgba(0,0,0,0.2)]">
            <span className="flex-1 pt-px tracking-[0.05px]">Buraya bir mesaj yazın</span>
            <svg viewBox="0 0 18 18" className="size-[18px]" fill="none" stroke="#777" strokeWidth="1.200">
              <circle cx="9" cy="9" r="8.300" />
              <circle cx="6.200" cy="7" r=".6" fill="#777" /><circle cx="11.800" cy="7" r=".6" fill="#777" />
              <path d="M4.800 10.800c1.600 3 6.800 3 8.400 0" />
            </svg>
            <svg viewBox="0 0 18 18" className="ml-[22px] size-[18px]" fill="none" stroke="#777" strokeWidth="1.200" strokeLinejoin="round">
              <path d="M1.200.8 16.800 9l-4.600 1.800.6 6.200-3.200-2.500L4 17.200zM1.200.8l10.300 9.700M6.500 6.500l2 4.700-3.200 4.300" />
            </svg>
          </div>
        </div>
      </div>
    </section>
  );
}

export default function App() {
  return (
    <div className="relative flex h-[897px] w-full flex-col overflow-hidden bg-[#0e121c] font-[Lato,Inter,sans-serif]">
      <div className="flex min-h-0 flex-1">
        <div className="flex min-w-0 flex-1 flex-col">
          <div className="h-[7px] shrink-0 bg-[#592c18]" />
          <Header />
          <Nav />
          <div className="flex min-h-0 flex-1">
            <Sidebar />
            <History />
          </div>
        </div>
        <div className="w-1.5 shrink-0 bg-white">
          <div className="h-[827px] rounded-b-full bg-[#ff6600]" />
        </div>
      </div>
      <div className="flex h-[7px] shrink-0 justify-center border-t border-[#52423c] bg-[#33201a]">
        <div className="mt-[3px] mr-[-136px] h-1 w-[38px] rounded-t-sm bg-[#4a3a34]" />
      </div>

      <Chat />
      <button className="absolute top-[754px] left-[1789px] flex size-[52px] items-center justify-center rounded-full bg-gradient-to-r from-[#ff9a42] to-[#e17b22] text-white shadow-[0_1px_6px_rgba(0,0,0,0.5)]">
        <ChevronDown className="mt-1 size-6" />
      </button>
    </div>
  );
}
